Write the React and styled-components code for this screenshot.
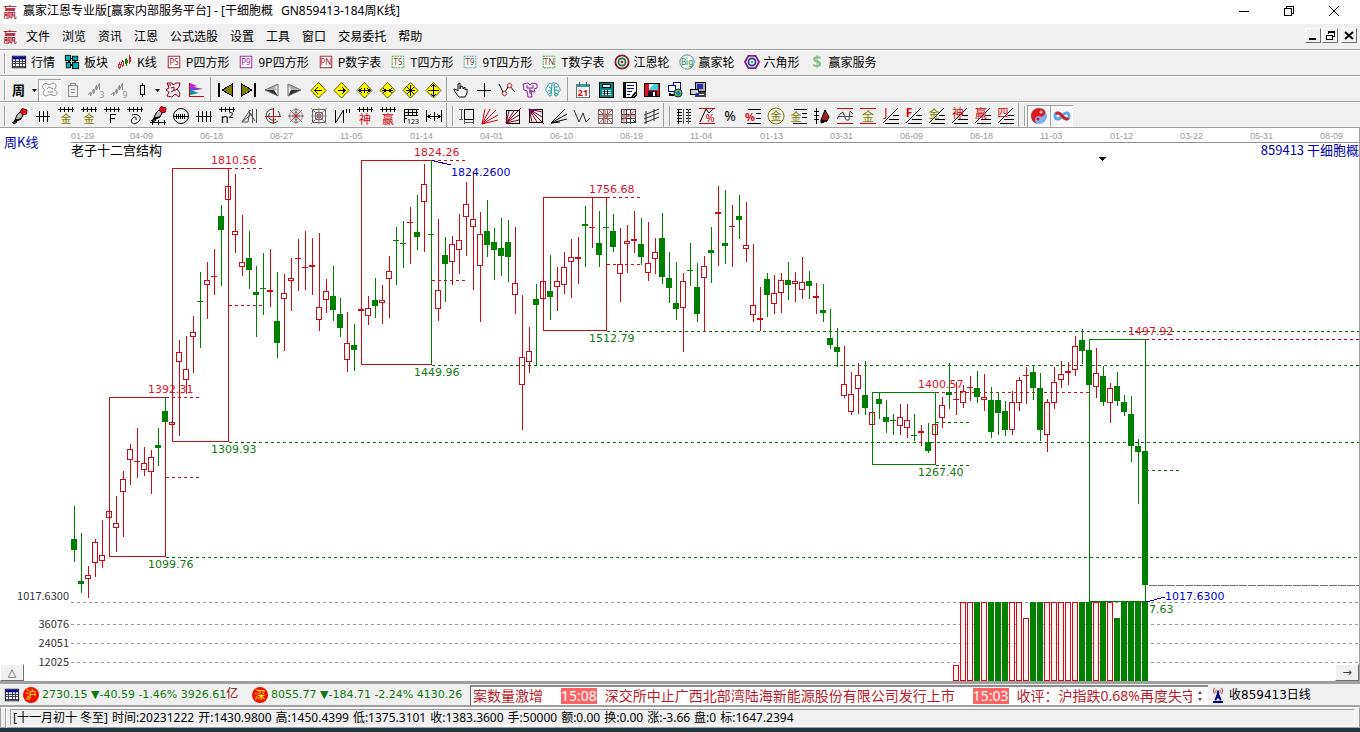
import React from 'react';
import styled, { createGlobalStyle } from 'styled-components';

const RED = '#d00a14';
const GREEN = '#008000';
const OLIVE = '#808000';
const WINE = '#900020';
const GRAY = '#8c8c8c';

const GlobalStyle = createGlobalStyle`
  * {
    box-sizing: border-box;
  }

  body {
    margin: 0;
    background: #1d3842;
    color: #000;
    font-family: 'Noto Sans', 'Noto Sans CJK SC', sans-serif;
    font-size: 12px;
  }

  svg {
    overflow: visible;
  }

  button {
    margin: 0;
    padding: 0;
    border: 0;
    background: none;
    color: inherit;
    font: inherit;
    white-space: nowrap;
  }
`

const Window = styled.div`
  height: 100vh;
  padding-bottom: 4px;
  display: flex;
  flex-direction: column;
  overflow: hidden;
`

const TitleBar = styled.header`
  height: 24px;
  padding: 0 4px 2px 3px;
  background: #fff;
  display: flex;
  align-items: center;
  gap: 6px;

  h1 {
    flex: 1;
    margin: 0;
    font: 12px/22px 'Noto Sans', 'Noto Sans CJK SC', sans-serif;
    white-space: pre;
  }

  h1 span {
    margin-left: 8px;
  }
`

const Logo = styled.span`
  width: 14px;
  color: #b00020;
  font: 14px/20px 'Noto Sans CJK SC', sans-serif;
`

const Captions = styled.div`
  display: flex;

  button {
    width: 45px;
    height: 20px;
    display: flex;
    align-items: center;
    justify-content: center;
  }
`

const MenuBar = styled.nav`
  height: 26px;
  padding: 0 3px 2px 3px;
  background: #f0f0f0;
  border-bottom: 1px solid #a0a0a0;
  display: flex;
  align-items: center;
  gap: 9px;
`

const MenuList = styled.div`
  flex: 1;
  display: flex;
  gap: 12px;
  font-family: 'Noto Sans CJK SC', sans-serif;
`

const ChildCaptions = styled.div`
  display: flex;
  gap: 1px;

  button {
    width: 16px;
    height: 15px;
    border: 1px solid;
    border-color: #fff #707070 #707070 #fff;
    display: flex;
    align-items: center;
    justify-content: center;
  }

  button:last-child {
    margin-left: 2px;
  }
`

const ToolBar = styled.div`
  height: 26px;
  padding-top: ${props => (props.$text ? 0 : 2)}px;
  background: #f0f0f0;
  border-top: 1px solid #fff;
  border-bottom: 1px solid #a0a0a0;
  display: flex;
  align-items: center;
  overflow: hidden;
`

const Grip = styled.span`
  flex: none;
  width: 2px;
  height: 20px;
  margin: 0 ${props => props.$after || 2}px 0 4px;
  border-left: 1px solid #a0a0a0;
  border-right: 1px solid #fff;
`

const Divider = styled.span`
  flex: none;
  width: 1px;
  height: 26px;
  margin: 0 ${props => props.$room || 0}px;
  background: #a0a0a0;
`

const Shortcuts = styled.div`
  padding-bottom: 2px;
  display: flex;
  gap: 9px;
  font: 12px/18px 'Noto Sans CJK SC', sans-serif;

  button {
    display: flex;
    align-items: center;
    gap: 4px;
  }
`

const ToolButton = styled.button`
  flex: none;
  width: 23px;
  height: 22px;
  display: flex;
  align-items: center;
  justify-content: center;
  background: ${props => (props.$pressed ? '#f8f8f8' : 'none')};
  box-shadow: ${props => (props.$pressed ? 'inset 1px 1px #a0a0a0, inset -1px -1px #fff' : 'none')};
`

const Period = styled.span`
  font: bold 13px/20px 'Noto Sans CJK SC', sans-serif;
`

const DropArrow = styled.button`
  flex: none;
  width: 8px;
  height: 22px;
  display: flex;
  align-items: center;
  justify-content: center;
`

const ChartPane = styled.main`
  flex: 1;
  min-height: 0;
  position: relative;
  background: #fff;
  border-right: 1px solid #a0a0a0;
  overflow: hidden;

  > svg {
    display: block;
  }
`

const CornerButton = styled.button`
  position: absolute;
  bottom: 0;
  ${props => props.$side}: 0;
  width: 24px;
  height: 17px;
  background: #f0f0f0;
  border: 1px solid;
  border-color: #fff #707070 #707070 #fff;
  color: #404040;
  font: 11px/14px 'DejaVu Sans', sans-serif;
  text-align: center;
`

const QuoteBar = styled.section`
  height: 26px;
  padding: 0 2px 0 4px;
  background: #f0f0f0;
  border-top: 3px solid #a0a0a0;
  border-bottom: 2px solid #a0a0a0;
  display: flex;
  align-items: center;
  font: 11px/18px 'DejaVu Sans', 'Noto Sans CJK SC', sans-serif;
`

const Market = styled.div`
  flex: none;
  width: ${props => props.$wide}px;
  display: flex;
  align-items: center;
  gap: 3px;
  color: #107a10;
  white-space: pre;

  b {
    color: #900000;
    font-size: 12px;
    font-weight: normal;
  }
`

const Ticker = styled.div`
  flex: 1 1 738px;
  max-width: 738px;
  height: 20px;
  border-top: 2px solid #8c8c8c;
  border-left: 1px solid #606060;
  background: #fff;
  display: flex;
  overflow: hidden;
`

const News = styled.div`
  flex: 1;
  padding-left: 2px;
  display: flex;
  gap: 18px;
  overflow: hidden;
  color: #b81c2c;
  font: 14px/18px 'Noto Sans', 'Noto Sans CJK SC', sans-serif;
  white-space: nowrap;

  p {
    flex: none;
    margin: 0;
  }

  time {
    margin-right: 8px;
    background: #ff6464;
    color: #fff;
    display: inline-block;
    height: 16px;
    line-height: 16px;
  }
`

const Spinner = styled.div`
  flex: none;
  width: 16px;
  display: flex;
  flex-direction: column;
  justify-content: center;
  align-items: center;
  gap: 4px;

  button {
    display: flex;
  }
`

const Receiver = styled.div`
  flex: none;
  padding-left: 2px;
  display: flex;
  align-items: center;
  gap: 3px;
  font-size: 12px;
`

const InfoBar = styled.footer`
  height: 21px;
  background: #f0f0f0;
  border: 1px solid #a0a0a0;
  border-top-color: #fff;
  display: flex;
  align-items: center;

  p {
    flex: 1;
    height: 17px;
    margin: 0 4px 0 1px;
    padding-left: 2px;
    border: 1px solid;
    border-color: #a0a0a0 #fff #fff #a0a0a0;
    display: flex;
    gap: 4px;
    line-height: 16px;
    white-space: nowrap;
  }
`

// stroke and text helpers for the 18x18 icons
const P = ({ d, c = '#000', f = 'none', w = 1, soft }) => (
  <path d={d} stroke={c} fill={f} strokeWidth={w} shapeRendering={soft ? 'auto' : 'crispEdges'} />
)

const T = ({ x = 9, y = 14, s = 9, c = '#000', b, children }) => (
  <text x={x} y={y} fill={c} fontSize={s} fontWeight={b ? 700 : 400} textAnchor="middle"
    fontFamily="'Noto Sans', 'Noto Sans CJK SC', sans-serif">{children}</text>
)

const Ticks = () => <P d="M1 2.5H17M3.5 0V5M7.5 0V5M11.5 0V5M15.5 0V5" />

const Pen = () => (
  <g>
    <P soft d="M4 13L6 8L9 5L12 8L10 12Z" f="#b8b8b8" />
    <P soft d="M9 5L11 1.5L16 3L15.5 7L12 8Z" f="#e01020" c="#700010" />
    <P soft d="M4 13L10 12L2 16Z" f="#000" />
    <P soft d="M1 15L3 17L6 15" />
  </g>
)

const Diamond = ({ d }) => (
  <g>
    <P soft d="M9.5 1.5L17 9.5L9.5 17L2 9.5Z" f="#ffff00" c="#606000" />
    <P d={d} />
  </g>
)

const Frame = ({ c, t, tc = c }) => (
  <g>
    <rect x="2.5" y="2.5" width="13" height="13" fill="#fff" stroke={c} strokeDasharray={t[0] === 'T' ? '2 1' : 'none'} />
    <T y={12} s={9} c={tc}>{t}</T>
  </g>
)

const Fan = () => <P d="M1 16L16 1M3 16.5H17M7 12.5H17M11 8.5H17" />

const Table = () => (
  <g>
    <rect x="1.5" y="2.5" width="15" height="13" fill="#fff" stroke="#000" />
    <rect x="2" y="3" width="14" height="3" fill="#0000a0" />
    <P d="M2 8.5H16M2 10.5H16M2 13.5H16M5.5 6V15M9.5 6V15M12.5 6V15" c="#303048" />
  </g>
)

const icons = {
  table: <Table />,
  blocks: (
    <g fill="#00b0b0" stroke="#000">
      <rect x="1.5" y="1.5" width="6" height="6" /><rect x="9.5" y="2.5" width="6" height="5" />
      <rect x="2.5" y="9.5" width="5" height="6" /><rect x="9.5" y="9.5" width="7" height="7" />
      <P d="M7 5H10M6 7V10M12 7V10M7 12H10" w={2} />
    </g>
  ),
  kline: (
    <g>
      <P d="M2.5 9V17M6.5 7V15M14.5 1V11" c={RED} /><P d="M10.5 4V13" c={GREEN} />
      <P d="M1.5 11.5H3.5V15.5H1.5ZM5.5 8.5H7.5V12.5H5.5ZM13.5 3.5H15.5V8.5H13.5Z" c={RED} f="#fff" />
      <P d="M9.5 6.5H11.5V10.5H9.5Z" c={GREEN} f={GREEN} />
    </g>
  ),
  ps: <Frame c="#a01020" t="PS" />,
  p9: <Frame c="#a010a0" t="P9" />,
  pn: <Frame c="#a01020" t="PN" />,
  ts: <Frame c="#10a010" tc="#803020" t="TS" />,
  t9: <Frame c="#10a0a0" tc="#803020" t="T9" />,
  tn: <Frame c="#10a010" tc="#803020" t="TN" />,
  wheel: (
    <g fill="none">
      <circle cx="9" cy="9" r="7.5" stroke="#802020" strokeWidth="2" /><circle cx="9" cy="9" r="4" stroke="#207050" strokeWidth="2" />
      <circle cx="9" cy="9" r="1.5" fill="#a02020" />
    </g>
  ),
  big: (
    <g><circle cx="9" cy="9" r="8" fill="#f4fff4" stroke="#507890" /><T y={12} s={9} c="#208050">Big</T></g>
  ),
  hex: (
    <g>
      <P soft d="M1 9L5 2H13L17 9L13 16H5Z" c="#802080" w={2} />
      <circle cx="9" cy="9" r="4" fill="none" stroke="#2040a0" strokeWidth="2" /><circle cx="9" cy="9" r="1" fill="#207060" />
    </g>
  ),
  dollar: <T y={15} s={18} c="#88c088" b>$</T>,

  puzzle: <P soft d="M3 3C6 1 7 5 10 3S15 3 15 5S12 8 15 10S15 16 11 14S6 17 3 14S5 10 3 8S1 5 3 3M6 8L8 6L12 8M7 11H12" c={GRAY} />,
  clip: <P d="M4.5 4.5H13.5V15.5H4.5ZM6.5 4V2.5H11.5V4M7 8.5H11M7 11.5H11" c={GRAY} />,
  wave3: <g><P d="M1 14L3.5 11V15L6.5 8V13L9.5 4V9L12.5 2V9" c={GRAY} soft /><T x={15} y={17} s={8} c={GRAY}>3</T></g>,
  wave9: <g><P d="M1 14L3.5 11V15L6.5 8V13L9.5 4V9L12.5 2V9" c={GRAY} soft /><T x={15} y={17} s={8} c={GRAY}>9</T></g>,
  candle: <P d="M9.5 2V5M9.5 13V16M7.5 4.5H11.5V13.5H7.5Z" />,
  map: <P soft d="M3 2H8L9 4L12 2H16L15 6L13 8L16 12L15 16L11 13L8 16L3 15L5 11L2 9L5 7ZM7 7L10 6V9L7 11M10 10L13 8M4 4H7" c={WINE} />,
  flag: (
    <g>
      <path d="M3 2L10 5L3 7Z" fill="#e010e0" /><path d="M3 5L16 8L3 10Z" fill="#8040d0" /><path d="M3 9L12 12L3 14Z" fill="#109090" />
      <P d="M2.5 2V15.5H17" c={RED} />
    </g>
  ),
  first: <g><P d="M2 2V16" w={2} /><P d="M15.5 3V15L5 9Z" f={OLIVE} /></g>,
  last: <g><P d="M15 2V16" w={2} /><P d="M1.5 3V15L12 9Z" f={OLIVE} /></g>,
  prev: <g><path d="M15 3L2 9H15L12 7Z" fill="#b0b0b0" /><path d="M2 9H11L15 15Z" fill="#303030" /><P soft d="M15 3L2 9L15 15V3" c="#707070" /></g>,
  next: <g><path d="M2 3L15 9H5Z" fill="#b0b0b0" /><path d="M15 9H5L2 15Z" fill="#303030" /><P soft d="M2 3L15 9L2 15V3" c="#707070" /></g>,
  left: <Diamond d="M6 9.5H13M9 6L6 9.5L9 13" />,
  right: <Diamond d="M6 9.5H13M10 6L13 9.5L10 13" />,
  wide: <Diamond d="M4 9.5H15M7 7L4 9.5L7 12M12 7L15 9.5L12 12M9.5 7V12" />,
  narrow: <Diamond d="M4 9.5H15M5 7L8 9.5L5 12M14 7L11 9.5L14 12" />,
  shrink: <Diamond d="M5 9.5H14M9.5 4V15M6 6L13 13M13 6L6 13" />,
  grow: <Diamond d="M4 9.5H15M9.5 4V15M7 6L9.5 4L12 6M7 13L9.5 15L12 13" />,
  hand: <P soft d="M7 16L3 11L2 8L5 9L6 10V3L8 2V8L9 5L11 6V8L13 6V9L15 8V12L13 16Z" f="#fff" />,
  cross: <P d="M2 9.5H16M9.5 2V16" />,
  nodes: <g><P soft d="M1 3L6 13L11 4L17 11" /><P soft d="M5 11A2 2 0 1 0 8 14A2 2 0 1 0 5 11M10 3A2 2 0 1 0 13 6A2 2 0 1 0 10 3" c={RED} f="#fff" /></g>,
  pants: <P soft d="M2 3L7 2L9 4L11 2L16 3V7L13 8L14 11L10 10L11 16H7L6 10L3 9ZM6 4V7H12V4M8 10H12M9 7V13" c="#9020a0" />,
  brain: <P soft d="M7 2C4 2 4 5 3 6S1 10 3 11S3 15 7 15L8 2L11 2C14 2 14 5 15 6S17 10 15 11S15 15 11 15L10 3M5 6L8 8M4 10H7M5 13L8 11M11 6H14M11 9L15 10M11 12L14 13" c="#20a0a0" />,
  calendar: (
    <g><rect x="2.5" y="3.5" width="13" height="13" fill="#fff" stroke="#707070" /><path d="M3 3H15V6H3Z" fill="#30a0a0" /><P d="M5.5 1V5M12.5 1V5" c="#505050" /><T y={15} s={9} c={RED} b>21</T></g>
  ),
  calc: (
    <g><rect x="2.5" y="1.5" width="14" height="15" fill="#008890" stroke="#000" /><rect x="5.5" y="3.5" width="8" height="3" fill="#c0ffff" stroke="#000" /><P d="M5 9.5H14M5 11.5H14M5 13.5H14" c="#fff" /><P d="M7.5 9V14M10.5 9V14" /></g>
  ),
  note: (
    <g><P d="M3.5 1.5H16.5V14L14 16.5H3.5Z" f="#fff" /><P d="M4 2V16" w={3} /><P d="M7 4.5H14M7 7.5H14M7 10.5H12M7 13.5H10" c="#0000a0" /><P soft d="M12 16L16 11" w={2} /></g>
  ),
  floppy: (
    <g><rect x="1.5" y="2.5" width="15" height="13" fill="#e01020" stroke="#000" /><rect x="6" y="3" width="9" height="6" fill="#40d0e0" /><path d="M6 3H11L6 8Z" fill="#fff" /><rect x="5" y="10" width="9" height="6" fill="#101020" /><rect x="10" y="11" width="2" height="4" fill="#fff" /></g>
  ),
  net: (
    <g><rect x="7.5" y="1.5" width="7" height="7" fill="#fff" stroke="#0000a0" /><rect x="2.5" y="4.5" width="7" height="6" fill="#fff" stroke="#0000a0" /><circle cx="12" cy="12" r="4" fill="#90c020" stroke="#003050" /><path d="M9 11L13 10L15 13L12 15Z" fill="#1080c0" /><P d="M4 12V14H8" w={2} /></g>
  ),
  pc: (
    <g><rect x="6.5" y="1.5" width="10" height="9" fill="#b0b0b0" stroke="#000" /><rect x="8" y="3" width="6" height="5" fill="#2030b0" /><rect x="1.5" y="8.5" width="8" height="5" fill="#d0d0d0" stroke="#000" /><P d="M9 12H16V15H6" w={2} c="#404040" /><circle cx="8" cy="14" r="2" fill="#2030b0" /></g>
  ),

  pen: <Pen />,
  ticks3: <P d="M2 9.5H16M5.5 4V15M9.5 4V15M13.5 4V15" />,
  gold: <g><Ticks /><T y={16} s={11} c={OLIVE}>金</T></g>,
  ticksF: <g><Ticks /><P d="M7.5 16V7.5H13M7 11.5H12" /></g>,
  spiral: <g><Ticks /><P soft d="M6 8C13 6 17 11 12 15S4 15 6 12S11 10 10 13" /></g>,
  penRuler: <g><g transform="translate(1 -2)"><Pen /></g><P d="M1 15.5H17M3.5 13V18M9.5 13V18M15.5 13V18" /></g>,
  ringTicks: <g><circle cx="9" cy="9" r="7.5" fill="none" stroke="#000" /><P d="M1 9.5H17M4.5 7V12M6.5 7V12M8.5 7V12M10.5 7V12M12.5 7V12" /></g>,
  ticks4: <P d="M1 9.5H17M3.5 4V15M7.5 4V15M11.5 4V15M15.5 4V15" />,
  n2: <g><Ticks /><T y={16} s={13}>n²</T></g>,
  angle: <P soft d="M1 15L9 3L7 15ZM1 15L12 6M11.5 2V16M15.5 2V16M9 6L14 14" c="#505050" />,
  redWheel: <g><P soft d="M9 2A7 7 0 1 0 14 14M14 4A7 7 0 0 1 16 9M6 6A4 4 0 1 0 12 12" c="#303030" /><P d="M1 9.5H17M9.5 1V17" c={RED} /></g>,
  web: <g><circle cx="9" cy="9" r="6.5" fill="none" stroke={GRAY} /><circle cx="9" cy="9" r="3.5" fill="none" stroke={GRAY} /><P soft d="M1 9H17M9 1V17M3 3L15 15M15 3L3 15" c="#806060" /><circle cx="9" cy="9" r="1.5" fill={RED} /></g>,
  webBox: <g><P d="M2.5 2.5H15.5V15.5H2.5ZM5.5 5.5H12.5V12.5H5.5Z" c="#606060" /><P soft d="M1 1L17 17M17 1L1 17M9 1V17M1 9H17" c={GRAY} /><circle cx="9" cy="9" r="2" fill="none" stroke="#a04040" /></g>,
  zig: <P soft d="M2.5 3V16L10.5 3V16M13.5 2V6M16.5 2V6" />,
  god: <g><Ticks /><T y={17} s={12} c={RED}>神</T></g>,
  win: <g><Ticks /><T y={17} s={12} c={RED}>赢</T></g>,
  stairs: <g><P d="M2.5 16V2.5H17M3 5.5H16M3 8.5H16M6.5 2V9M10.5 2V9M14.5 2V9M2 11.5H5" /><T x={11} y={17} s={7}>123</T></g>,
  span: <P d="M1.5 3V15M16.5 3V15M3 9.5H15M9.5 5V14M6 7L3 9.5L6 12M12 7L15 9.5L12 12" />,

  measure: <g><P d="M6.5 2.5H15.5V12.5H6.5Z" /><P d="M1 2.5H5M1 12.5H5M3.5 3V12M6.5 13V17M15.5 13V17M7 15.5H15" c="#606060" /></g>,
  fanRed: <P soft d="M1 17L4 2M1 17L9 2M1 17L15 3M1 17L17 8M1 17L17 13" c={RED} />,
  fanBox: <g><P d="M2.5 3.5H15.5V16.5H2.5Z" /><P soft d="M2 16L5 4M2 16L10 4M2 16L17 1M2 16L15 8M2 16L15 13" c={WINE} /></g>,
  fanCorner: <g><P d="M2.5 2.5H15.5V15.5H2.5Z" /><P soft d="M2 2L5 15M2 2L10 15M2 2L17 17M2 2L15 10M2 2L15 5" c={WINE} /><path d="M2 2H9L4 8Z" fill="#701060" /></g>,
  fanBlack: <P soft d="M1 16L15 2M1 16L17 7M1 16L17 12M1 16L10 15" />,
  zigzag: <P soft d="M1 3L6 15L10 6L13 15L17 11" c="#303030" />,
  grid: <g><P d="M2.5 2.5H16.5V16.5H2.5ZM7.5 2V17M11.5 2V17M2 7.5H17M2 11.5H17" c="#707070" /><P soft d="M2 2L17 17M17 2L2 17M9 2V17M2 9H17" c="#c06060" /></g>,
  gridArrow: <g><P d="M2.5 2.5H16.5V15.5H2.5ZM7.5 2V17M11.5 2V17M2 7.5H17M2 11.5H17M14 13L17 16" c="#404040" /><P soft d="M2 14L17 3M5 2V17M2 9H17" c="#c06060" /></g>,
  channel: <P soft d="M2 8L17 2M2 12L17 6M2 16L17 10M4 4V17M12 2V14" c="#303030" />,

  scale: <g><P d="M3.5 2V17M2 2.5H7M2 5.5H7M2 8.5H7M2 11.5H7M2 14.5H7M11 2.5H16M11 5.5H16M11 8.5H16M11 11.5H16M11 14.5H16" /><P d="M8.5 2V17M13.5 2V17" c="#606060" /></g>,
  peak: <g><P d="M1 1.5H17M1 16.5H17" c={RED} /><P soft d="M2 15L8 2L11 6L15 2" /><T x={12} y={15} s={11} c={RED}>%</T></g>,
  percent: <T y={14} s={14}>%</T>,
  percentLines: <g><T x={6} y={14} s={11} c={RED} b>%</T><P d="M4 2.5H17M12 6.5H17M12 11.5H17M3 16.5H17" /></g>,
  goldRing: <g><circle cx="9" cy="9" r="8" fill="none" stroke={OLIVE} /><T y={13} s={11} c={OLIVE}>金</T></g>,
  goldLines: <g><P d="M4 2.5H17M12 6.5H17M12 10.5H17M3 16.5H17" /><T x={6} y={14} s={11} c={OLIVE}>金</T></g>,
  penScale: <g><P d="M3.5 1V17M1 4.5H6M1 8.5H6M1 12.5H6" /><P soft d="M8 13L12 3L16 10L14 14Z" f="#a02020" /><P soft d="M8 13L8 16L14 14" f="#000" /></g>,
  wave: <g><P d="M1 1.5H17M1 16.5H17" c={RED} /><P soft d="M1 12L4 7L7 5L10 13L13 13L14 4L17 7M2 9.5H17" c="#505050" /></g>,
  goldBand: <g><P d="M1 1.5H17M1 16.5H17" c={RED} /><T y={14} s={12} c={OLIVE}>金</T></g>,
  fanJ: <g><Fan /><T x={4} y={10} s={12} c={RED}>J</T></g>,
  fanF: <g><Fan /><T x={4} y={10} s={12} c={RED} b>F</T></g>,
  fanGold: <g><Fan /><T x={6} y={11} s={11} c={OLIVE}>金</T></g>,
  fanGod: <g><Fan /><T x={7} y={11} s={12} c={RED}>神</T></g>,
  fanWin: <g><Fan /><T x={7} y={11} s={12} c={RED}>赢</T></g>,
  fanFour: <g><Fan /><T x={6} y={10} s={11} c={RED}>四</T></g>,
  yinyang: (
    <g><circle cx="9" cy="9" r="8" fill="#80b0f0" /><path d="M9 1A8 8 0 0 0 9 17A4 4 0 0 1 9 9A4 4 0 0 0 13 2Z" fill="#e01820" /><circle cx="11" cy="5" r="1.5" fill="#f0c0c8" /><circle cx="8" cy="12" r="1.5" fill="#e01820" /></g>
  ),
  infinity: (
    <g fill="none" strokeWidth="3"><path d="M9 9C6 5 2 5 2 9S6 13 9 9" stroke="#60a8e0" /><path d="M9 9C12 13 16 13 16 9S12 5 9 9" stroke="#60a8e0" /><path d="M3 7C6 4 9 9 10 10S14 13 15 11" stroke="#d02030" /></g>
  ),
  antenna: <g><P soft d="M7 3A4 4 0 0 0 7 7M11 3A4 4 0 0 1 11 7M5 1A6 6 0 0 0 5 8M13 1A6 6 0 0 1 13 8" c="#c02030" /><P soft d="M9 4V8M9 7L6 15M9 7L12 15M7 12H11" c="#000080" w={2} /><P d="M3 16.5H15" c="#000080" w={2} /></g>,
}

const Icon = ({ name, size = 18 }) => (
  <svg width={size} height={size} viewBox="0 0 18 18" aria-hidden="true">{icons[name]}</svg>
)

const Tool = ({ name, pressed }) => (
  <ToolButton $pressed={pressed} aria-label={name}><Icon name={name} /></ToolButton>
)

const Drop = ({ label }) => (
  <DropArrow aria-label={label}>
    <svg width="5" height="3" viewBox="0 0 5 3"><path d="M0 0H5L2.5 3Z" /></svg>
  </DropArrow>
)

const menus = ['文件', '浏览', '资讯', '江恩', '公式选股', '设置', '工具', '窗口', '交易委托', '帮助'];

const shortcuts = [
  ['table', '行情'], ['blocks', '板块'], ['kline', 'K线'], ['ps', 'P四方形'], ['p9', '9P四方形'],
  ['pn', 'P数字表'], ['ts', 'T四方形'], ['t9', '9T四方形'], ['tn', 'T数字表'], ['wheel', '江恩轮'],
  ['big', '赢家轮'], ['hex', '六角形'], ['dollar', '赢家服务'],
];

const moveTools = ['first', 'last', 'prev', 'next', 'left', 'right', 'wide', 'narrow', 'shrink', 'grow'];
const mouseTools = ['hand', 'cross', 'nodes', 'pants', 'brain'];
const appTools = ['calendar', 'calc', 'note', 'floppy', 'net', 'pc'];

const drawTools = [
  ['pen', 'ticks3', 'gold', 'gold', 'ticksF', 'spiral', 'penRuler', 'ringTicks', 'ticks4', 'n2', 'angle',
    'redWheel', 'web', 'webBox', 'zig', 'god', 'win', 'stairs', 'span'],
  ['measure', 'fanRed', 'fanBox', 'fanCorner', 'fanBlack', 'zigzag', 'grid', 'gridArrow', 'channel'],
  ['scale', 'peak', 'percent', 'percentLines', 'goldRing', 'goldLines', 'penScale', 'wave', 'goldBand',
    'fanJ', 'fanF', 'fanGold', 'fanGod', 'fanWin', 'fanFour'],
];

// colour, high, body top, body bottom, low
const candles = `
g 506 539 550 562|g 533 581 584 593|r 566 575 579 598|r 539 542 563 577|r 520 555 561 568|r 511 511 518 518
r 496 523 528 552|r 471 479 492 537|r 444 449 460 485|r 428 461 461 478|r 447 463 470 476|r 450 457 472 494
g 428 445 448 466|g 397 411 422 422|r 422 422 425 425|r 340 352 362 436|r 336 369 380 394|r 316 332 337 373
g 272 301 301 348|r 262 280 285 319|r 249 276 276 295|g 205 216 230 286|r 186 186 200 200|r 174 231 235 253
r 215 262 267 276|g 231 258 270 289|g 266 292 295 337|g 253 288 288 315|r 249 290 292 307|g 272 321 343 358
r 274 293 299 351|r 258 278 281 311|r 239 258 258 291|r 231 267 267 290|r 238 265 267 295|r 233 307 320 331
r 279 291 300 313|g 266 296 310 321|g 298 314 328 337|r 312 343 360 372|g 324 345 350 371|r 309 309 311 311
r 296 308 316 325|g 278 300 306 318|r 285 300 303 324|r 256 271 279 318|g 227 240 240 285|g 221 243 243 268
r 207 222 222 264|g 195 232 237 250|r 164 184 202 252|g 160 234 234 364|r 219 290 309 321|g 237 255 264 302
r 236 244 262 285|r 214 240 250 274|r 182 204 217 256|r 171 219 227 290|r 212 234 266 322|g 200 231 245 257
g 228 242 250 280|g 218 248 256 276|g 220 242 257 282|r 227 283 295 314|r 295 357 385 430|r 327 351 362 373
g 284 299 305 365|r 281 281 299 299|g 255 291 297 320|r 267 281 287 311|r 252 267 285 294|r 239 257 262 298
r 237 257 259 284|g 206 224 226 267|r 197 227 227 248|g 211 243 255 267|g 206 227 227 264|g 214 231 247 252
r 228 264 274 302|r 225 241 244 273|r 211 239 241 253|g 218 244 257 265|r 222 263 273 281|r 238 252 259 274
g 213 238 277 284|g 252 278 288 303|g 262 303 309 320|r 273 281 308 352|g 243 270 270 286|g 263 287 314 322
r 256 266 278 332|g 227 250 253 283|r 186 212 214 266|g 190 243 246 264|r 205 226 226 267|g 195 216 220 239
r 202 245 249 262|r 244 305 315 322|r 287 318 320 331|g 273 279 295 317|r 275 293 304 314|r 273 280 293 313
g 262 280 285 300|r 272 281 284 302|r 257 282 290 299|g 271 281 286 299|r 283 296 298 314|g 284 310 313 322
g 309 338 345 349|g 328 347 352 367|r 346 384 396 398|r 372 394 412 415|r 363 375 389 414|g 361 395 408 415
r 412 412 425 425|g 392 399 404 419|g 400 417 422 433|g 414 420 420 435|r 404 417 426 435|r 404 420 428 438
g 414 435 435 441|r 425 431 433 446|g 423 442 451 453|r 424 424 435 464|r 397 405 418 428|g 363 392 395 409
r 382 399 399 415|r 385 391 403 408|r 376 387 387 401|g 371 388 397 403|r 374 397 400 411|g 387 400 432 438
g 392 400 413 435|g 401 411 430 436|r 391 402 430 435|r 377 380 403 411|r 367 375 375 404|g 366 372 388 400
g 373 388 430 441|r 399 402 435 452|r 367 382 403 409|r 361 374 380 388|r 362 371 373 385|r 336 346 370 376
g 329 340 351 364|g 350 350 385 385|r 348 373 387 398|g 366 376 402 406|r 383 388 403 423|g 372 386 401 406
g 395 402 412 416|g 396 414 446 462|g 439 446 452 504|g 451 451 585 602
`.trim().split(/[|\n]/).map((row) => {
  const [color, ...y] = row.split(' ');
  return { color: color === 'r' ? RED : GREEN, rising: color === 'r', y: y.map(Number) };
});

const STEP = 7;
const FIRST_X = 74;
const FIRST_VOLUME = 126;
const volumeTop = { 126: 665, 136: 618, 149: 618 };

const dates = ['04-09', '06-18', '08-27', '11-05', '01-14', '04-01', '06-10', '08-19', '11-04', '01-13',
  '03-31', '06-09', '08-18', '11-03', '01-12', '03-22', '05-31', '08-09'];

// x, y, width, height, colour
const boxes = [
  [109, 397, 56, 159, RED], [172, 168, 56, 273, RED], [361, 160, 70, 204, RED],
  [543, 197, 63, 133, RED], [872, 392, 63, 72, GREEN], [1089, 339, 56, 262, GREEN],
];

// x1, x2, y, colour
const END = '100%';
const dashes = [
  [71, END, 602, '#999'], [71, END, 624, '#999'], [71, END, 643, '#999'], [71, END, 662, '#999'],
  [166, 199, 397, RED], [166, 199, 477, '#b01040'], [166, END, 557, '#007000'],
  [229, 262, 168, RED], [229, 262, 305, '#b01040'], [229, END, 442, '#007000'],
  [432, 465, 160, RED], [432, 465, 280, RED], [432, END, 365, '#007000'],
  [607, 640, 197, RED], [607, 640, 264, RED], [607, END, 331, '#007000'],
  [936, 1089, 392, RED], [936, 969, 422, '#007000'], [936, 969, 465, '#007000'],
  [1146, END, 339, '#c00030'], [1146, 1179, 470, '#007000'],
];

const UP = '#dc1430';
const DOWN = '#107a10';
const BLUE = '#0000cc';
const labels = [
  ['1392.31', 148, 393, UP], ['1099.76', 148, 568, DOWN], ['1810.56', 211, 164, UP], ['1309.93', 211, 453, DOWN],
  ['1824.26', 414, 156, UP], ['1449.96', 414, 376, DOWN], ['1824.2600', 451, 176, BLUE],
  ['1756.68', 589, 193, UP], ['1512.79', 589, 342, DOWN], ['1400.57', 918, 388, UP], ['1267.40', 918, 476, DOWN],
  ['1497.92', 1128, 335, UP], ['1017.6300', 1165, 600, BLUE], ['7.63', 1149, 613, DOWN],
];

const axis = [['1017.6300', 600], ['36076', 628], ['24051', 647], ['12025', 666]];

const Candle = ({ x, color, rising, y: [high, top, bottom, low] }) => {
  const tall = bottom - top;
  return (
    <g fill={color}>
      <rect x={x} y={high} width="1" height={top - high} />
      <rect x={x} y={bottom} width="1" height={low - bottom} />
      {rising && tall > 2
        ? <rect x={x - 2.5} y={top + 0.5} width="5" height={tall - 1} fill="none" stroke={color} />
        : <rect x={x - 3} y={top} width="6" height={Math.max(tall, 1)} />}
    </g>
  )
}

const Volume = ({ x, top, color, rising }) => (
  rising
    ? <rect x={x - 2.5} y={top + 0.5} width="5" height={680 - top} fill="#fff4f2" stroke={color} />
    : <rect x={x - 3} y={top} width="6" height={681 - top} fill={color} />
)

const Chart = () => (
  <svg width="100%" height="553" shapeRendering="crispEdges">
    <g transform="translate(0 -128)">
      <line x1="71" x2={END} y1="142.5" y2="142.5" stroke="#909090" />
      <g fill="#999" fontFamily="'Liberation Sans', sans-serif" fontSize="9">
        <text x="71" y="139">01-29</text>
        {dates.map((date, i) => <text key={date} x={130 + i * 70} y="139">{date}</text>)}
      </g>
      <g fontFamily="'Noto Sans CJK SC', sans-serif" fontSize="13">
        <text x="4" y="147" fill="#0000b0">周K线</text>
        <text x="71" y="155">老子十二宫结构</text>
        <text x={END} y="155" fill="#0000b0" textAnchor="end">859413 干细胞概</text>
      </g>
      <path d="M1098 157H1107L1102.5 161Z" />
      {dashes.map(([x1, x2, y, color]) => (
        <line key={`${x1}-${y}`} x1={x1} x2={x2} y1={y + 0.5} y2={y + 0.5} stroke={color} strokeDasharray="3 3" />
      ))}
      <line x1="1149" x2={END} y1="585.5" y2="585.5" stroke="#707070" strokeDasharray="8 1" />
      {boxes.map(([x, y, w, h, color]) => (
        <rect key={x} x={x + 0.5} y={y + 0.5} width={w} height={h} fill="none" stroke={color} />
      ))}
      {candles.map((c, i) => <Candle key={i} x={FIRST_X + i * STEP} {...c} />)}
      {candles.slice(FIRST_VOLUME).map(({ color, rising }, i) => (
        <Volume key={i} x={FIRST_X + (FIRST_VOLUME + i) * STEP} top={volumeTop[FIRST_VOLUME + i] || 602}
          color={color} rising={rising} />
      ))}
      <path d="M432 160.5L451 165M1146 602L1165 597" stroke={BLUE} fill="none" />
      <g fontFamily="'DejaVu Sans', sans-serif" fontSize="11">
        {labels.map(([text, x, y, color]) => <text key={text} x={x} y={y} fill={color}>{text}</text>)}
      </g>
      <g fontFamily="'Noto Sans CJK SC', sans-serif" fontSize="11" fill="#333" textAnchor="end">
        {axis.map(([text, y]) => <text key={text} x="69" y={y}>{text}</text>)}
      </g>
    </g>
  </svg>
)

const Badge = ({ children }) => (
  <svg width="16" height="16" viewBox="0 0 16 16">
    <circle cx="8" cy="8" r="8" fill="#f01000" />
    <text x="8" y="12" fill="#ffff00" fontSize="11" textAnchor="middle" fontFamily="'Noto Sans CJK SC', sans-serif">{children}</text>
  </svg>
)

const fields = ['[十一月初十 冬至]', '时间:20231222', '开:1430.9800', '高:1450.4399', '低:1375.3101', '收:1383.3600',
  '手:50000', '额:0.00', '换:0.00', '涨:-3.66', '盘:0', '标:1647.2394'];

const App = () => (
  <>
    <GlobalStyle />
    <Window>
      <TitleBar>
        <Logo>赢</Logo>
        <h1>赢家江恩专业版[赢家内部服务平台] - [干细胞概<span>GN859413-184周K线]</span></h1>
        <Captions>
          <button aria-label="最小化"><svg width="12" height="12"><P d="M1 6.5H11" /></svg></button>
          <button aria-label="还原"><svg width="12" height="12"><P d="M1.5 3.5H8.5V10.5H1.5ZM3.5 3V1.5H10.5V8.5H9" /></svg></button>
          <button aria-label="关闭"><svg width="12" height="12"><P soft d="M1 1L11 11M11 1L1 11" /></svg></button>
        </Captions>
      </TitleBar>
      <MenuBar>
        <Logo>赢</Logo>
        <MenuList>{menus.map(menu => <button key={menu}>{menu}</button>)}</MenuList>
        <ChildCaptions>
          <button aria-label="最小化子窗口"><svg width="10" height="11"><P d="M1 9H8" w={2} /></svg></button>
          <button aria-label="还原子窗口"><svg width="10" height="11"><P d="M1.5 5.5H7.5V9.5H1.5ZM1 5H8M3.5 4V1.5H9.5V6.5H8M3 2H10" /></svg></button>
          <button aria-label="关闭子窗口"><svg width="10" height="11"><P soft d="M1 2L9 9M9 2L1 9" w={2} /></svg></button>
        </ChildCaptions>
      </MenuBar>

      <ToolBar $text>
        <Grip $after={5} />
        <Shortcuts>
          {shortcuts.map(([icon, text]) => <button key={text}><Icon name={icon} size={16} />{text}</button>)}
        </Shortcuts>
      </ToolBar>
      <ToolBar>
        <Grip $after={1} />
        <ToolButton><Period>周</Period></ToolButton>
        <Drop label="选择周期" />
        <Tool name="puzzle" pressed />
        <Tool name="clip" />
        <Tool name="wave3" />
        <Tool name="wave9" />
        <Tool name="candle" />
        <Drop label="选择线型" />
        <Tool name="map" />
        <Tool name="flag" />
        <Divider $room={3} />
        {moveTools.map(name => <Tool key={name} name={name} />)}
        <Divider $room={2} />
        {mouseTools.map(name => <Tool key={name} name={name} />)}
        <Divider $room={3} />
        {appTools.map(name => <Tool key={name} name={name} />)}
      </ToolBar>
      <ToolBar>
        <Grip />
        {drawTools.map((group, g) => (
          <React.Fragment key={g}>
            {group.map((name, i) => <Tool key={i} name={name} />)}
            <Divider $room={1} />
            <Grip $after={1} />
          </React.Fragment>
        ))}
        <Tool name="yinyang" pressed />
        <Tool name="infinity" pressed />
      </ToolBar>

      <ChartPane>
        <Chart />
        <CornerButton $side="left" aria-label="展开">△</CornerButton>
        <CornerButton $side="right" aria-label="向右">→</CornerButton>
      </ChartPane>

      <QuoteBar>
        <Market $wide={248}>
          <Icon name="table" size={16} />
          <Badge>沪</Badge>
          <span>2730.15 ▼-40.59 -1.46% 3926.61<b>亿</b></span>
        </Market>
        <Market $wide={218}>
          <Badge>深</Badge>
          <span>8055.77 ▼-184.71 -2.24% 4130.26</span>
        </Market>
        <Ticker>
          <News>
            <p>案数量激增</p>
            <p><time>15:08</time>深交所中止广西北部湾陆海新能源股份有限公司发行上市</p>
            <p><time>15:03</time>收评：沪指跌0.68%再度失守</p>
          </News>
          <Spinner>
            <button aria-label="上一条"><svg width="4" height="3"><path d="M0 3L2 0L4 3Z" fill="#505050" /></svg></button>
            <button aria-label="下一条"><svg width="4" height="3"><path d="M0 0L2 3L4 0Z" fill="#505050" /></svg></button>
          </Spinner>
        </Ticker>
        <Receiver>
          <Icon name="antenna" size={16} />
          收859413日线
        </Receiver>
      </QuoteBar>
      <InfoBar>
        <Grip />
        <p>{fields.map(field => <span key={field}>{field}</span>)}</p>
      </InfoBar>
    </Window>
  </>
);

export default App;
